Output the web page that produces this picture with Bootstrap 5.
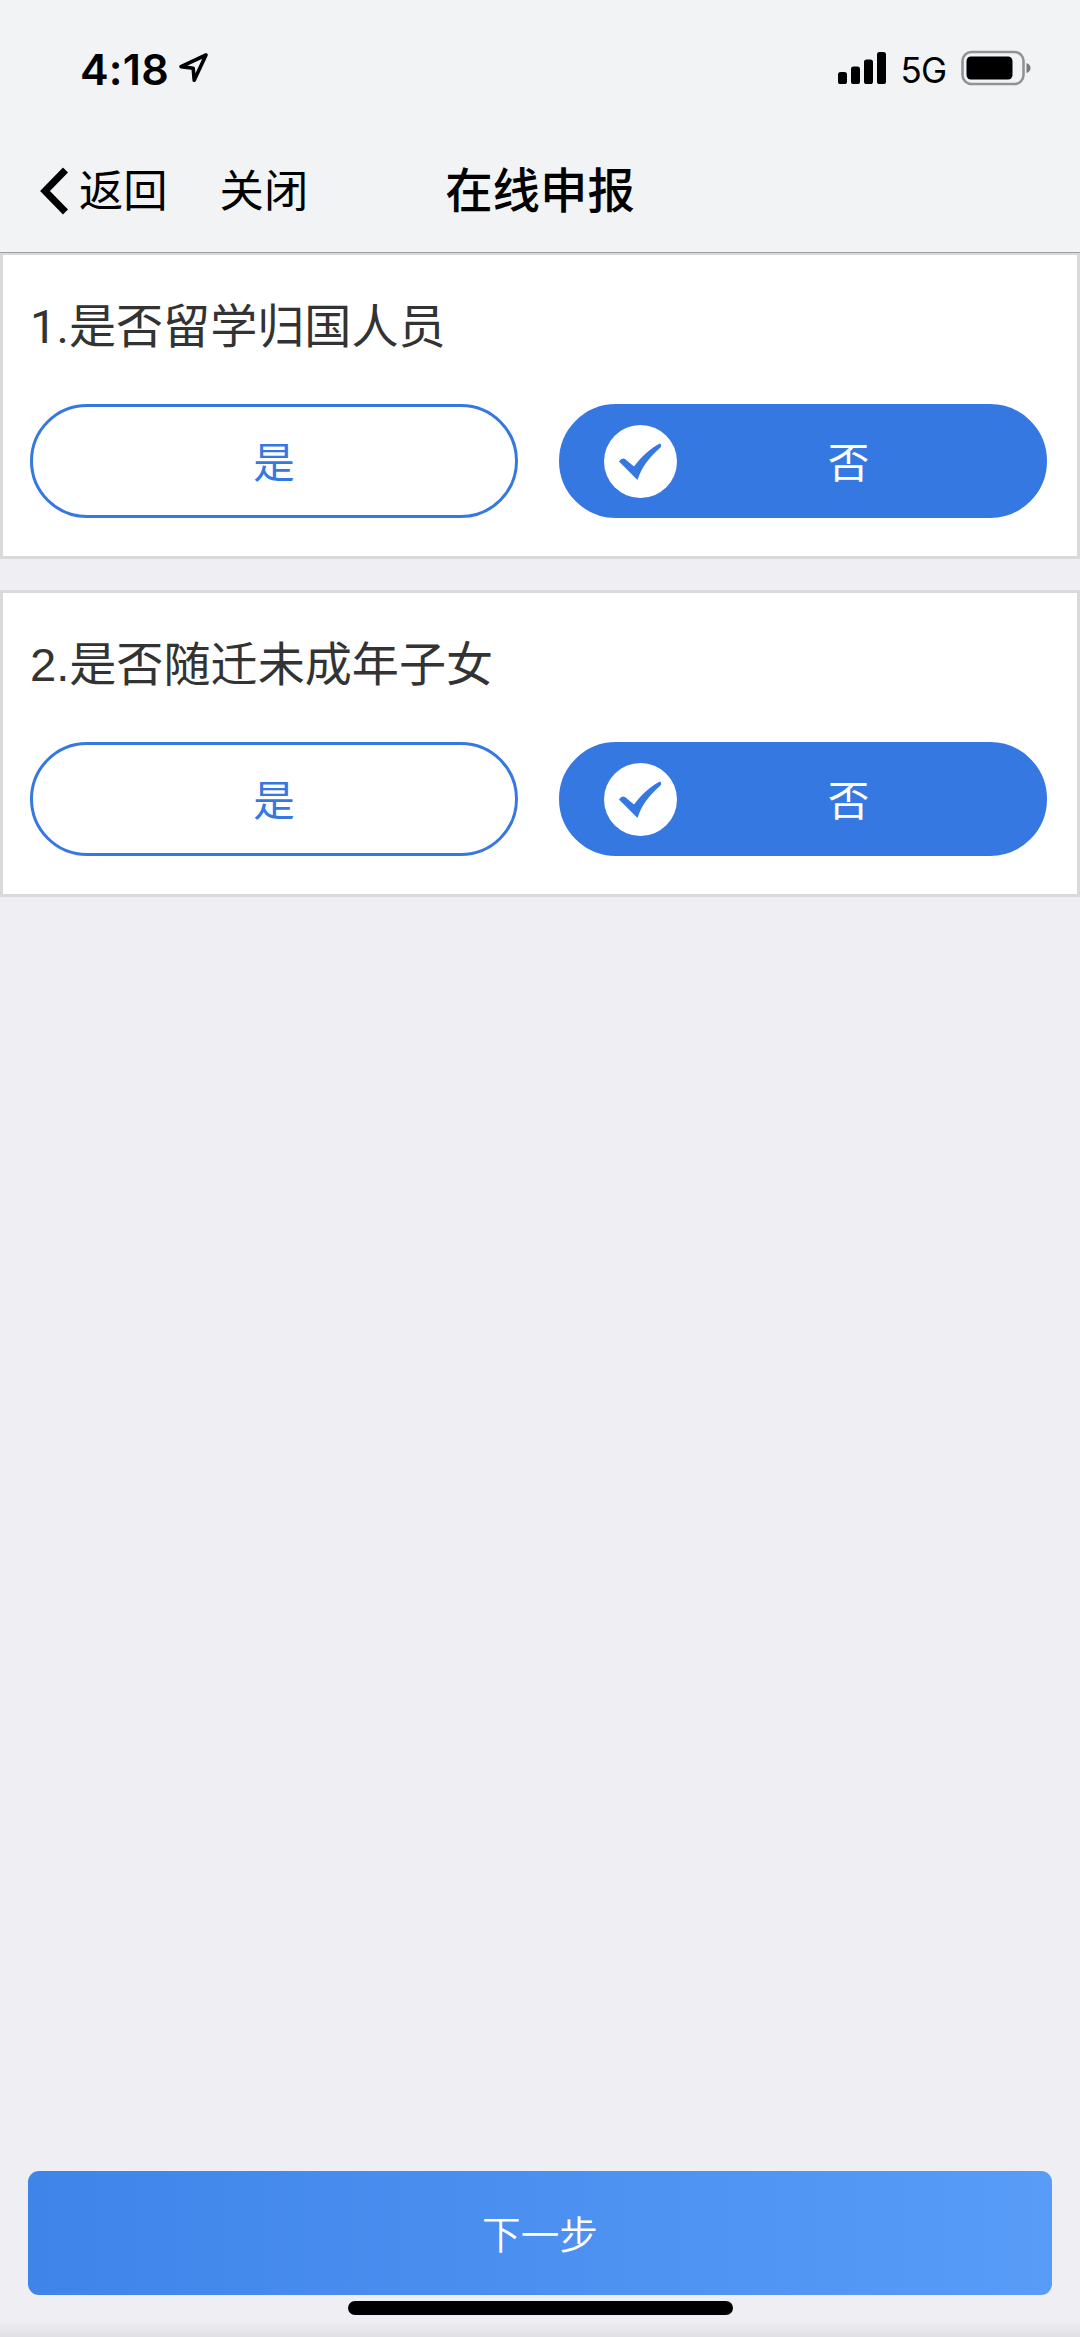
<!DOCTYPE html>
<html lang="zh-CN">
<head>
<meta charset="utf-8">
<meta name="viewport" content="width=device-width, initial-scale=1">
<title>在线申报</title>
<link href="https://cdn.jsdelivr.net/npm/bootstrap@5.3.0/dist/css/bootstrap.min.css" rel="stylesheet">
<style>
  body { background: #eeeef3; color: #333; font-family: "Liberation Sans", "Noto Sans CJK SC", sans-serif; }
  .screen { height: 2337px; overflow: hidden; }
  .top-area { background: #f1f3f5; color: #000; height: 253px; border-bottom: 1px solid #9d9e9f; }
  .status-bar { height: 136px; padding: 0 49px 0 80px; font-family: Inter, sans-serif; }
  .clock { font-size: 43px; font-weight: 600; line-height: 1; letter-spacing: .2px; padding-top: 2px; }
  .network { font-size: 35px; line-height: 1; font-weight: 400; margin: 4px 15px 0 14px; letter-spacing: -1px; }
  .title-bar { height: 112px; padding: 0 39px; font-size: 44.3px; }
  .title-bar .nav-title { font-size: 47.4px; font-weight: 500; }
  .title-bar a { color: #000; line-height: 1; }
  .title-bar .close-link { margin-left: 52px; }
  .question { border: 3px solid #d9d9d9; border-radius: 0; height: 307px; padding: 44px 30px 0 27px; }
  .question-first { border-top-width: 2px; height: 306px; }
  .question h2 { font-size: 47.1px; line-height: 56px; font-weight: 400; margin: 0 0 49px; color: #333; }
  .question-first .num { font-family: Roboto, sans-serif; }
  .choices { gap: 41px; }
  .choice { flex: none; width: 488px; height: 114px; border: 3px solid #3578e2; border-radius: 57px; font-size: 41.5px; line-height: 1; color: #3578e2; padding: 5px 0 0; }
  .choice.chosen { background: #3578e2; color: #fff; padding: 0 0 0 42px; }
  .choice.chosen span { padding: 5px 24px 0 0; }
  .choice .tick { width: 73px; height: 73px; flex: none; }
  .gap-strip { height: 31px; }
  .next-step { height: 124px; margin: 0 28px; padding: 6px 0 0; border: 0; border-radius: 11px; color: #fff; font-size: 38.7px; font-weight: 350; line-height: 1; background: linear-gradient(90deg, #3f84e9, #589cf8); }
  .home-area { height: 42px; padding-top: 6px; background: linear-gradient(to bottom, transparent 26px, #dfdfe4 42px); }
  .home-line { width: 385px; height: 14px; background: #000; }
</style>
<script src="https://cdn.jsdelivr.net/npm/bootstrap@5.3.0/dist/js/bootstrap.bundle.min.js"></script>
</head>
<body>
<div class="screen d-flex flex-column">
  <header class="top-area flex-shrink-0">
    <div class="status-bar d-flex align-items-center justify-content-between">
      <div class="d-flex align-items-center">
        <span class="clock">4:18</span>
        <svg class="ms-2" width="32" height="32" viewBox="0 0 32 32" fill="none" stroke="#000" stroke-width="3.6" stroke-linejoin="round"><path d="M29 3 4 14.6 16.2 16.2 17.2 28.3Z"/></svg>
      </div>
      <div class="d-flex align-items-center">
        <svg width="49" height="34" viewBox="0 0 49 34"><rect y="21" width="9" height="12" rx="2.6"/><rect x="13" y="15.500" width="9" height="17.500" rx="2.600"/><rect x="26" y="8.500" width="9" height="24.500" rx="2.600"/><rect x="39" y="1" width="9" height="32" rx="2.600"/></svg>
        <span class="network">5G</span>
        <svg width="70" height="36" viewBox="0 0 70 36"><rect x="1.500" y="2" width="61" height="32" rx="9" fill="none" stroke="#929394" stroke-width="2.600"/><rect x="5.500" y="6.500" width="46" height="23" rx="4.500"/><path d="M65.500 13Q69.500 14.500 69.500 18T65.500 23Z" fill="#77797a"/></svg>
      </div>
    </div>
    <nav class="title-bar row g-0 align-items-center">
      <div class="col-4 d-flex align-items-center">
        <a href="#" class="d-flex align-items-center text-decoration-none">
          <svg width="40" height="50" viewBox="0 0 40 50" fill="none" stroke="#000" stroke-width="7"><path d="M26.500 3 6 24 26.500 45"/></svg>
          <span>返回</span>
        </a>
        <a href="#" class="close-link text-decoration-none">关闭</a>
      </div>
      <div class="col-4 nav-title text-center">在线申报</div>
    </nav>
  </header>

  <main class="flex-grow-1">
    <section class="card question question-first">
      <h2><span class="num">1.</span>是否留学归国人员</h2>
      <div class="choices d-flex">
        <button class="choice btn">是</button>
        <button class="choice chosen btn d-flex align-items-center">
          <svg class="tick" viewBox="0 0 73 73"><circle cx="36.500" cy="36.500" r="36.500" fill="#fff"/><path d="M15 36.500Q17.500 32.500 21 34L30 41.500C38 31 47 23 56 18.500Q58 19.500 56.500 22.500C46 32 38 41 33.500 55Z" fill="#3578e2"/></svg>
          <span class="flex-grow-1">否</span>
        </button>
      </div>
    </section>
    <div class="gap-strip"></div>
    <section class="card question">
      <h2>2.是否随迁未成年子女</h2>
      <div class="choices d-flex">
        <button class="choice btn">是</button>
        <button class="choice chosen btn d-flex align-items-center">
          <svg class="tick" viewBox="0 0 73 73"><circle cx="36.500" cy="36.500" r="36.500" fill="#fff"/><path d="M15 36.500Q17.500 32.500 21 34L30 41.500C38 31 47 23 56 18.500Q58 19.500 56.500 22.500C46 32 38 41 33.500 55Z" fill="#3578e2"/></svg>
          <span class="flex-grow-1">否</span>
        </button>
      </div>
    </section>
  </main>

  <button class="next-step btn flex-shrink-0">下一步</button>
  <footer class="home-area flex-shrink-0"><div class="home-line rounded-pill mx-auto"></div></footer>
</div>
</body>
</html>
